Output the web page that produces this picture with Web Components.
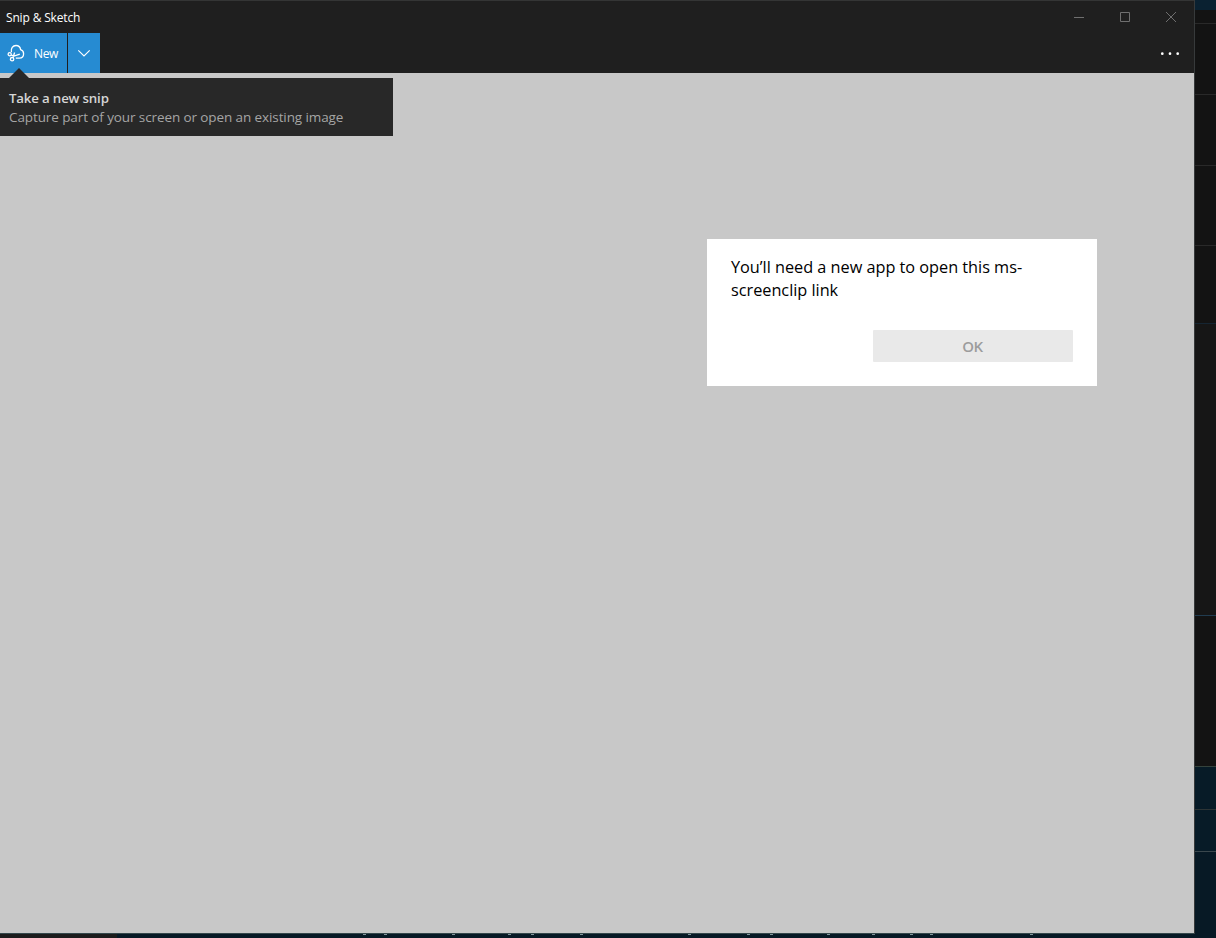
<!DOCTYPE html>
<html lang="en">
<head>
<meta charset="utf-8">
<title>Snip &amp; Sketch</title>
<style>
  html, body {
    margin: 0;
    height: 100%;
    overflow: hidden;
    background: #06131c;
    font-family: "Open Sans", "Noto Sans", sans-serif;
  }
</style>
</head>
<body>
<desktop-screen>
  <app-window>
    <title-bar slot="title">Snip &amp; Sketch</title-bar>
    <tool-bar slot="toolbar">
      <new-button>New</new-button>
    </tool-bar>
    <teaching-tip slot="overlay">
      <span slot="heading">Take a new snip</span>
      <span>Capture part of your screen or open an existing image</span>
    </teaching-tip>
    <message-dialog slot="overlay">
      <span>You’ll need a new app to open this ms-<br>screenclip link</span>
      <span slot="action">OK</span>
    </message-dialog>
  </app-window>
  <side-strip slot="side"></side-strip>
  <bottom-strip slot="bottom"></bottom-strip>
</desktop-screen>

<script>
// Shared setup: attach an open shadow root and fill it
class BaseElement extends HTMLElement {
  constructor () {
    super()
    this.attachShadow({ mode: 'open' })
    this.shadowRoot.innerHTML = this.render()
  }
}

// The whole screen: the window, and what shows behind its edges
class DesktopScreen extends BaseElement {
  render () {
    return `
    <style>
      :host {
        display: grid;
        grid-template-columns: 1195px 1fr;
        grid-template-rows: 934px 1fr;
        width: 1216px;
        height: 938px;
      }
      .side { display: grid; }
      .bottom { display: grid; grid-column: 1 / -1; }
    </style>
    <slot></slot>
    <div class="side"><slot name="side"></slot></div>
    <div class="bottom"><slot name="bottom"></slot></div>
    `
  }
}

class AppWindow extends BaseElement {
  render () {
    return `
    <style>
      :host {
        display: flex;
        flex-direction: column;
        position: relative;
        box-sizing: border-box;
        border-right: 1px solid #373a3b;
        border-bottom: 1px solid #34474b;
        background: #1f1f1f;
      }
      .canvas {
        flex: 1;
        background: #c8c8c8;
      }
    </style>
    <slot name="title"></slot>
    <slot name="toolbar"></slot>
    <div class="canvas"></div>
    <slot name="overlay"></slot>
    `
  }
}

class TitleBar extends BaseElement {
  render () {
    return `
    <style>
      :host {
        display: flex;
        justify-content: space-between;
        box-sizing: border-box;
        height: 33px;
        border-top: 1px solid #343535;
        color: #fff;
        font-size: 12px;
        line-height: 33px;
      }
      .name {
        padding-left: 6px;
        letter-spacing: -0.16px;
      }
      .controls {
        display: grid;
        grid-template-columns: repeat(3, 46px);
        height: 32px;
      }
      svg {
        width: 46px;
        height: 32px;
        fill: none;
        stroke: #6f6f6f;
      }
    </style>
    <span class="name"><slot></slot></span>
    <div class="controls">
      <svg viewBox="0 0 46 32"><path d="M18 16.5h10"/></svg>
      <svg viewBox="0 0 46 32"><path d="M18.500 11.500h9v9h-9z"/></svg>
      <svg viewBox="0 0 46 32"><path d="M18 11l10 10M28 11l-10 10"/></svg>
    </div>
    `
  }
}

class ToolBar extends BaseElement {
  render () {
    return `
    <style>
      :host {
        display: flex;
        justify-content: space-between;
        height: 40px;
      }
      svg {
        width: 48px;
        height: 40px;
        fill: #fff;
      }
    </style>
    <slot></slot>
    <svg viewBox="0 0 48 40">
      <circle cx="16.300" cy="20.700" r="1.350"/>
      <circle cx="24" cy="20.700" r="1.350"/>
      <circle cx="31.700" cy="20.700" r="1.350"/>
    </svg>
    `
  }
}

// Split button: cloud with scissors, label, then the dropdown part
class NewButton extends BaseElement {
  render () {
    return `
    <style>
      :host {
        display: flex;
        gap: 1px;
        color: #fff;
        font-size: 12px;
        line-height: 41px;
      }
      .main, .drop {
        display: flex;
        box-sizing: border-box;
        background: #268bd2;
      }
      .main {
        width: 67px;
        padding-left: 7px;
      }
      .drop { width: 32px; }
      svg {
        flex: none;
        fill: none;
        stroke: #fff;
      }
      .label {
        padding-left: 9px;
        letter-spacing: -0.4px;
      }
    </style>
    <div class="main">
      <svg width="18" height="40" viewBox="0 0 18 40" stroke-width="1.300">
        <path d="M4.400 19.200C3.600 15.400 5.800 12.500 9 12.500c2.500 0 4.200 1.400 4.600 4.100 1.900.6 3 2.200 3 4.200 0 2.500-1.700 4.400-4.300 4.400H8.800"/>
        <circle cx="2.700" cy="21.200" r="1.600"/>
        <circle cx="5.100" cy="26.200" r="1.700"/>
        <path d="M4.200 22.100l2.800 1 5.800-1.900M5.900 24.700L7.600 19.500"/>
      </svg>
      <span class="label"><slot></slot></span>
    </div>
    <div class="drop">
      <svg width="32" height="40" viewBox="0 0 32 40" stroke-width="1.100">
        <path d="M10.300 17.300l5.700 5.700 5.700-5.700"/>
      </svg>
    </div>
    `
  }
}

// Tip that hangs below the New button
class TeachingTip extends BaseElement {
  render () {
    return `
    <style>
      :host {
        display: flex;
        flex-direction: column;
        position: absolute;
        top: 78px;
        left: 0;
        box-sizing: border-box;
        width: 393px;
        height: 58px;
        padding: 11px 9px 0;
        background: #282828;
        color: #a5a5a5;
        font-size: 13.500px;
        line-height: 19px;
        white-space: nowrap;
      }
      :host::before {
        content: "";
        position: absolute;
        left: 9px;
        top: -10px;
        width: 20px;
        height: 10px;
        background: #282828;
        clip-path: polygon(50% 0, 100% 100%, 0 100%);
      }
      .heading {
        color: #d6d6d6;
        font-size: 13.300px;
        font-weight: 600;
        letter-spacing: -0.18px;
      }
      .text { letter-spacing: -0.1px; }
    </style>
    <div class="heading"><slot name="heading"></slot></div>
    <div class="text"><slot></slot></div>
    `
  }
}

class MessageDialog extends BaseElement {
  render () {
    return `
    <style>
      :host {
        display: flex;
        flex-direction: column;
        justify-content: space-between;
        position: absolute;
        top: 239px;
        left: 707px;
        box-sizing: border-box;
        width: 390px;
        height: 147px;
        padding: 17px 24px 24px;
        background: #fff;
        color: #000;
        font-size: 16.300px;
        line-height: 23px;
      }
      .text {
        letter-spacing: -0.02px;
        white-space: nowrap;
      }
      .action {
        align-self: flex-end;
        box-sizing: border-box;
        width: 200px;
        height: 32px;
        padding-right: 1px;
        border-radius: 1px;
        background: #e9e9e9;
        color: #9c9c9c;
        font-size: 15px;
        font-weight: 600;
        line-height: 33px;
        letter-spacing: -0.5px;
        text-align: center;
      }
    </style>
    <div class="text"><slot></slot></div>
    <div class="action"><slot name="action"></slot></div>
    `
  }
}

// Slice of the editor behind the window, on the right
class SideStrip extends BaseElement {
  render () {
    // height and colour of each band, and the line on top of it
    const bands = [
      [10, '#0a2131', '#0a2131'],
      [13, '#131313', '#131313'],
      [71, '#131313', '#292929'],
      [71, '#131313', '#292929'],
      [80, '#131313', '#292929'],
      [78, '#131313', '#292929'],
      [292, '#161616', '#152532'],
      [151, '#131313', '#213c50'],
      [43, '#071b27', '#34423c'],
      [42, '#071b27', '#2c3435'],
      [83, '#071925', '#3a474d']
    ]
    const bandsHtml = bands.map(([height, fill, line]) =>
      `<div style="height:${height}px;background:${fill};border-top:1px solid ${line}"></div>`).join('')
    return `
    <style>
      :host {
        display: flex;
        flex-direction: column;
        overflow: hidden;
      }
      div {
        flex: none;
        box-sizing: border-box;
      }
    </style>
    ${bandsHtml}
    `
  }
}

// Sliver below the window, with the descenders of the text line behind it
class BottomStrip extends BaseElement {
  render () {
    const marks = [364, 385, 453, 509, 532, 581, 689, 748, 771, 828, 873, 911, 931, 1031]
    const marksHtml = marks.map(x => `<path d="M${x - 1} .5h3"/>`).join('')
    return `
    <style>
      :host {
        display: block;
        background: linear-gradient(90deg, #1c1c1c 117px, #071925 117px);
      }
      svg {
        display: block;
        stroke: #84979d;
      }
    </style>
    <svg width="1216" height="4" viewBox="0 0 1216 4">${marksHtml}</svg>
    `
  }
}

customElements.define('desktop-screen', DesktopScreen)
customElements.define('app-window', AppWindow)
customElements.define('title-bar', TitleBar)
customElements.define('tool-bar', ToolBar)
customElements.define('new-button', NewButton)
customElements.define('teaching-tip', TeachingTip)
customElements.define('message-dialog', MessageDialog)
customElements.define('side-strip', SideStrip)
customElements.define('bottom-strip', BottomStrip)
</script>
</body>
</html>
